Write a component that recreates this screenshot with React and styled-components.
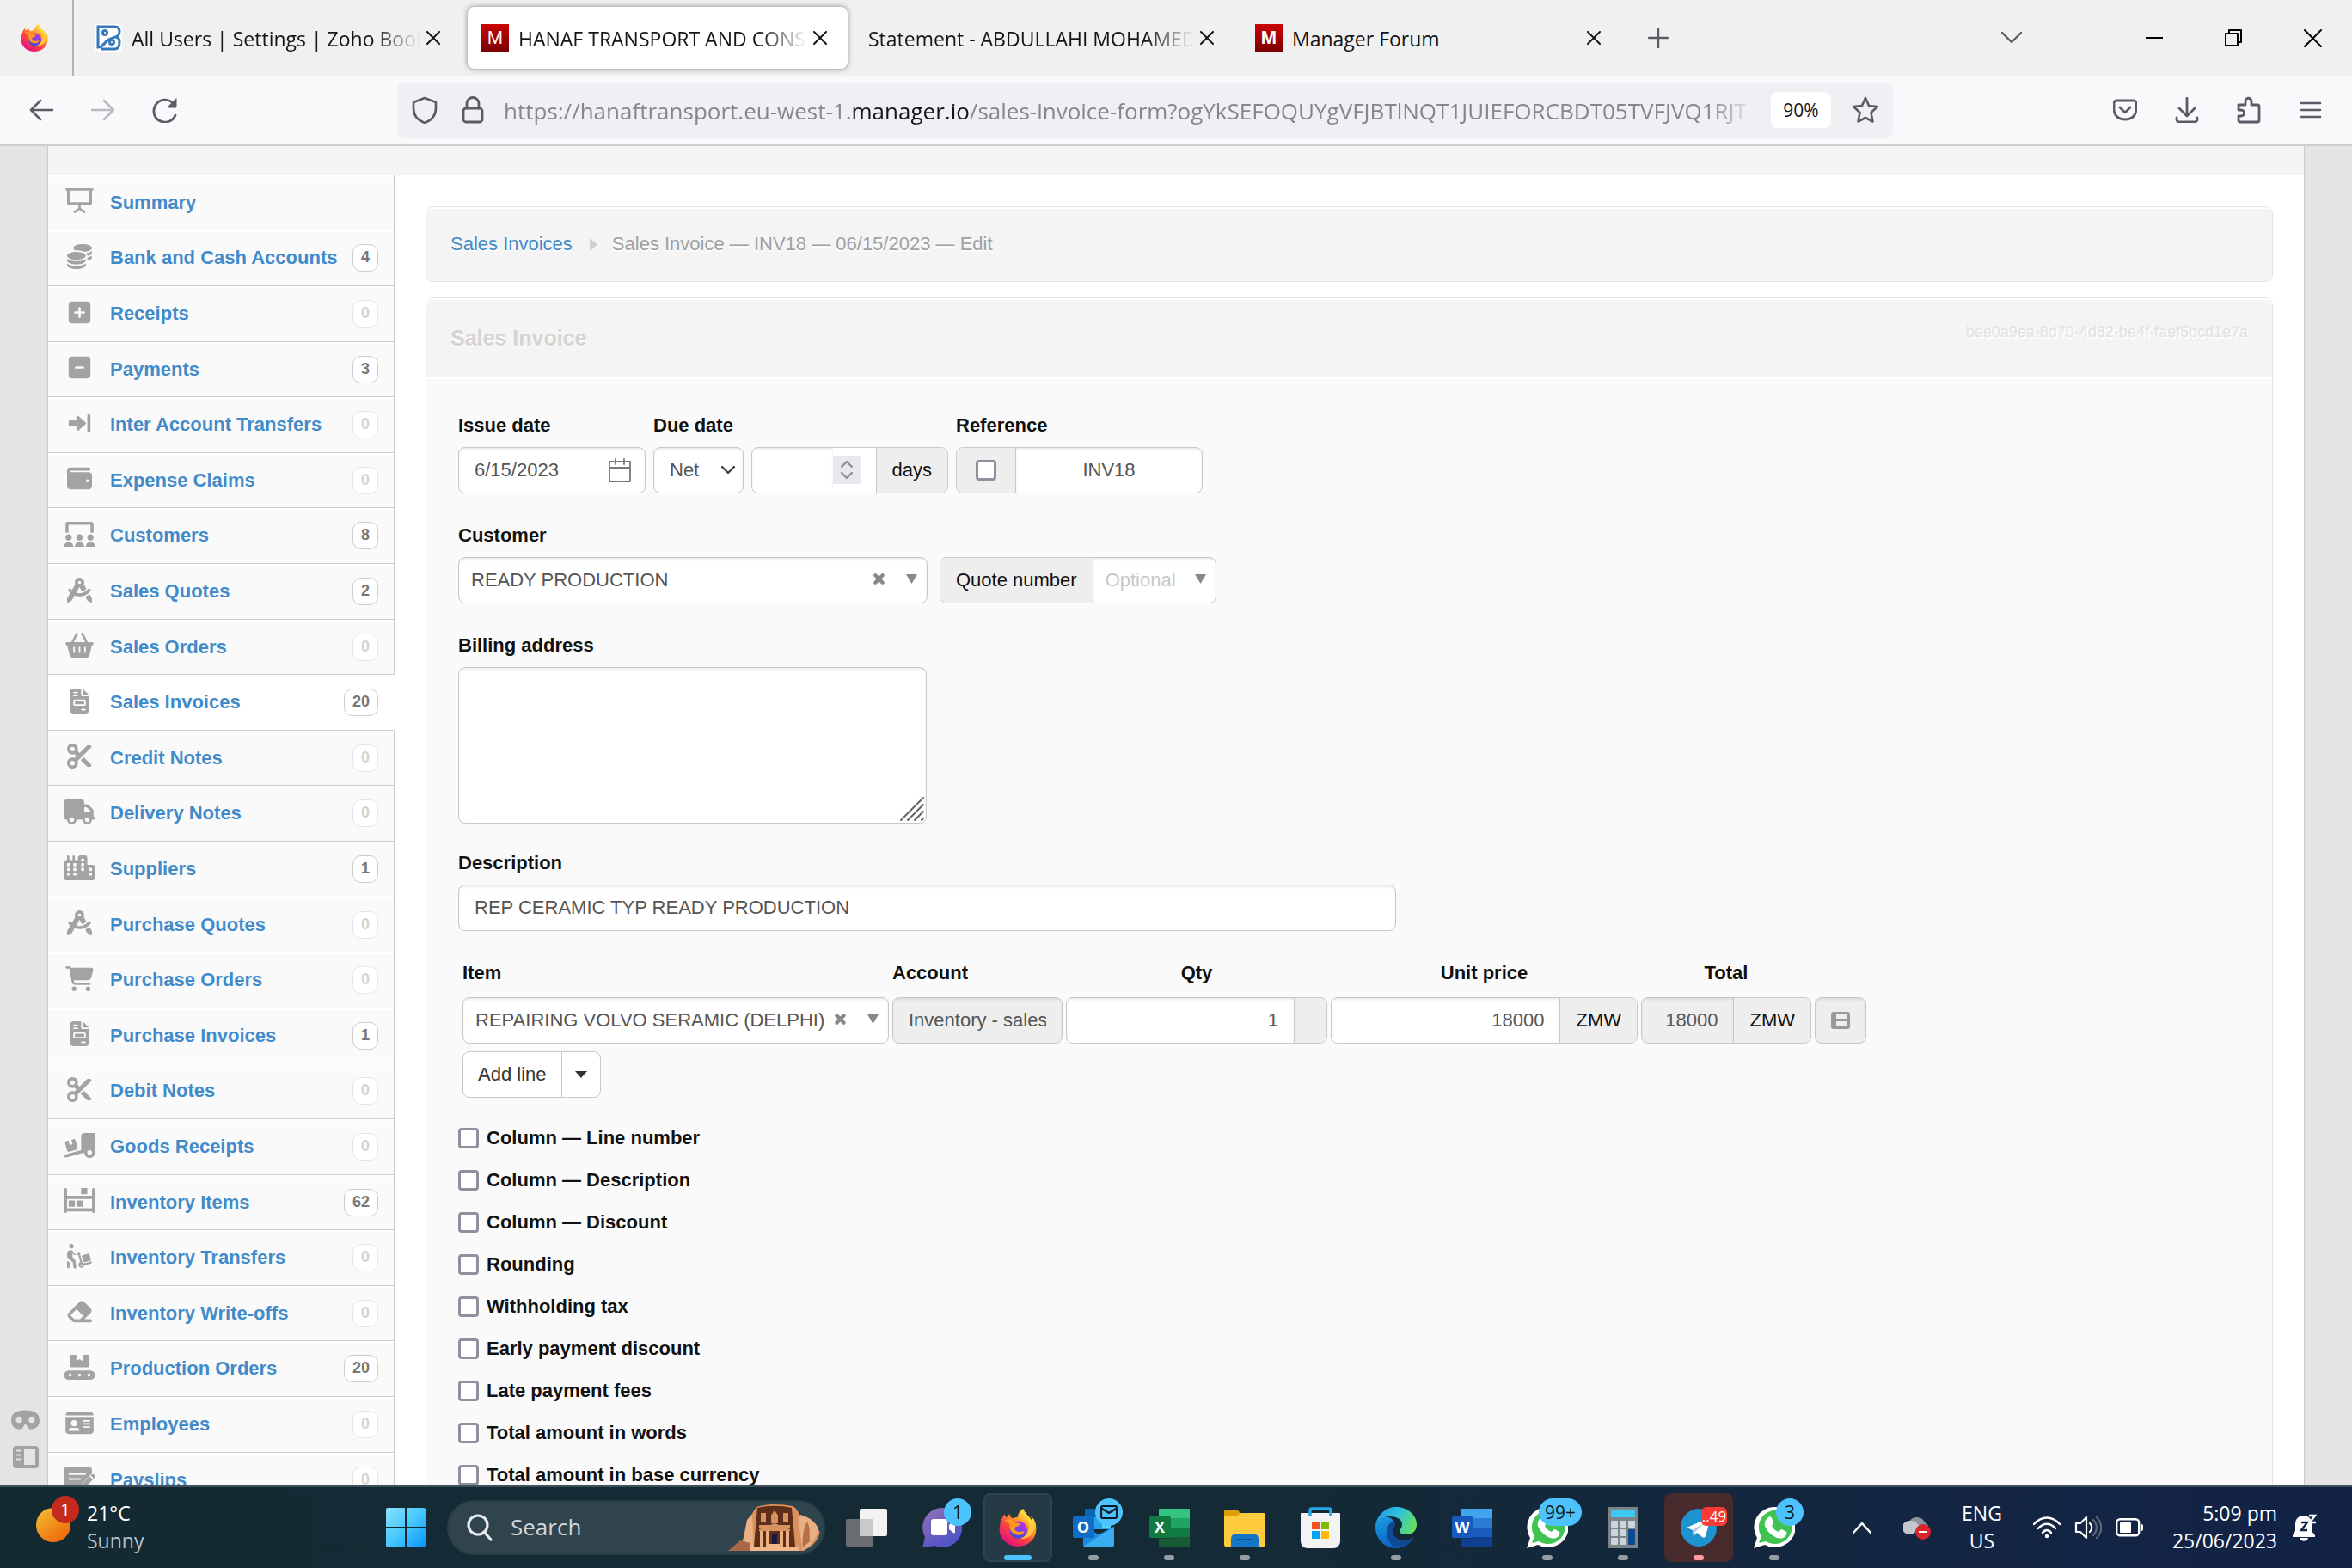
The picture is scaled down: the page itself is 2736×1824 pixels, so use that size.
import React from 'react';
import styled, { createGlobalStyle, css } from 'styled-components';
import {
  FaCoins, FaSquarePlus, FaSquareMinus, FaWallet, FaCompassDrafting, FaBasketShopping,
  FaFileInvoice, FaScissors, FaTruck, FaCity, FaCartShopping, FaTruckRampBox, FaEraser,
  FaIdCard, FaMask,
} from 'react-icons/fa6';

const UI = '"Open Sans", "Noto Sans", sans-serif';
const PAGE = '"Liberation Sans", Arial, sans-serif';

const GlobalStyle = createGlobalStyle`
  *, *::before, *::after { box-sizing: border-box; }
  body { margin: 0; overflow: hidden; background: #e4e4e4; font-family: ${PAGE}; }
  button, input, select, textarea { font: inherit; color: inherit; margin: 0; }
  button { border: 0; background: none; padding: 0; cursor: pointer; }
  a { text-decoration: none; }
  svg { display: block; flex: none; }
`;

/* ---------- shell ---------- */

const Screen = styled.div`
  height: 100vh;
  display: flex;
  flex-direction: column;
`;

const TabStrip = styled.header`
  flex: none;
  display: flex;
  align-items: center;
  height: 88px;
  background: #f0f0f0;
  font: 23px/32px ${UI};
  color: #15141a;
`;

const ViewButton = styled.button`
  display: grid;
  place-items: center;
  width: 86px;
  height: 88px;
  padding-right: 4px;
  border-right: 2px solid #b1b1b3;
`;

const TabList = styled.div`
  flex: 0 1 auto;
  display: flex;
  gap: 8px;
  padding: 0 11px 0 8px;
  min-width: 0;
`;

const Tab = styled.div`
  flex: 0 1 442px;
  width: 442px;
  min-width: 0;
  height: 72px;
  display: flex;
  align-items: center;
  gap: 11px;
  padding: 0 20px 0 16px;
  border-radius: 8px;
  ${p => p.$active && css`
    background: #fff;
    box-shadow: 0 0 6px rgba(0, 0, 0, 0.45);
  `}
`;

const TabTitle = styled.span`
  flex: 1;
  min-width: 0;
  margin-right: -8px;
  padding-top: 2px;
  overflow: hidden;
  white-space: nowrap;
  ${p => p.$fade && css`mask-image: linear-gradient(to left, transparent, #000 56px);`}
`;

const TabClose = styled.button`
  flex: none;
  display: grid;
  place-items: center;
  width: 24px;
  height: 32px;
`;

const RedMark = styled.span`
  flex: none;
  width: 32px;
  height: 32px;
  background: linear-gradient(#cc0404, #7a0000);
  color: #fff;
  font: ${p => (p.$bold ? 'bold' : 'normal')} 22px/32px ${PAGE};
  text-align: center;
`;

const StripButton = styled.button`
  flex: none;
  display: grid;
  place-items: center;
  width: ${p => p.$w || 64}px;
  height: 88px;
`;

const Push = styled.div`
  flex: 1;
`;

const TabsMenu = styled(StripButton)`
  margin-right: 88px;
`;

const NavBar = styled.nav`
  flex: none;
  display: flex;
  align-items: center;
  height: 82px;
  padding: 0 12px;
  background: #f9f9fb;
  border-bottom: 2px solid #ccc;
`;

const NavButton = styled.button`
  flex: none;
  display: grid;
  place-items: center;
  width: 72px;
  height: 64px;
  opacity: ${p => (p.disabled ? 0.4 : 1)};
`;

const AddressBar = styled.div`
  flex: 1;
  min-width: 0;
  display: flex;
  align-items: center;
  height: 64px;
  margin: 0 234px;
  padding: 0 4px;
  border-radius: 8px;
  background: #f0f0f4;
`;

const BarIcon = styled.button`
  flex: none;
  display: grid;
  place-items: center;
  width: 56px;
  height: 56px;
`;

const Address = styled.div`
  flex: 1;
  min-width: 0;
  padding: 2px 8px 0;
  overflow: hidden;
  white-space: nowrap;
  font: 26px/40px ${UI};
  color: #87868d;
  mask-image: linear-gradient(to left, transparent 10px, #000 60px);
  b { font-weight: 400; color: #15141a; }
`;

const ZoomLevel = styled.button`
  flex: none;
  width: 70px;
  height: 42px;
  margin: 0 12px 0 10px;
  border-radius: 8px;
  background: #fff;
  font: 21px/42px ${UI};
  color: #15141a;
`;

const Viewport = styled.div`
  flex: 1;
  min-height: 0;
  display: flex;
  overflow: hidden;
`;

const Gutter = styled.aside`
  flex: none;
  width: 55px;
  display: flex;
  flex-direction: column;
  justify-content: flex-end;
  align-items: center;
  gap: 14px;
  padding: 0 0 20px 4px;
  color: #a3a3a3;
`;

const MaskButton = styled.button`
  color: #a3a3a3;
  svg { width: 33px; height: auto; }
`;

const Page = styled.div`
  flex: 1;
  min-width: 0;
  background: #fff;
  border: solid #ccc;
  border-width: 0 1px;
`;

const PageBand = styled.div`
  height: 34px;
  background: #f4f4f4;
  border-bottom: 1px solid #d0d0d0;
`;

const Columns = styled.div`
  display: flex;
  align-items: flex-start;
`;

/* ---------- side menu ---------- */

const Menu = styled.nav`
  flex: none;
  width: 403px;
  display: grid;
  grid-auto-rows: 64px 65px 65px 64px 65px;
`;

const MenuRow = styled.a`
  display: flex;
  align-items: center;
  padding: 0 18px 0 16px;
  border: solid #ccc;
  border-width: 0 1px 1px 0;
  background: #fafafa;
  box-shadow: inset 0 2px 0 #fff;
  color: #428bca;
  font: bold 22px/26px ${PAGE};
  white-space: nowrap;
  ${p => p.$current && css`
    background: #fff;
    border-right-color: #fff;
  `}
`;

const MenuIcon = styled.span`
  display: grid;
  place-items: center;
  width: 40px;
  margin-right: 16px;
  padding-bottom: 4px;
  color: #a3a3a3;
  svg { width: 37px; height: 29px; }
`;

const MenuCount = styled.span`
  margin-left: auto;
  height: 32px;
  padding: 0 9px;
  border: 1px solid ${p => (p.$empty ? '#e6e6e6' : '#ccc')};
  border-radius: 10px;
  background: #fff;
  color: ${p => (p.$empty ? '#d4d4d4' : '#777')};
  font: bold 18px/29px ${PAGE};
`;

/* ---------- main column ---------- */

const Main = styled.main`
  flex: 1;
  min-width: 0;
  padding: 36px 36px 0;
  color: #111;
  font: 22px/26px ${PAGE};
`;

const Crumbs = styled.nav`
  display: flex;
  align-items: center;
  height: 88px;
  padding: 0 28px;
  border: 1px solid #e4e4e4;
  border-radius: 9px;
  background: #f4f4f4;
  box-shadow: inset 0 2px 0 #fff;
  text-shadow: 0 2px 0 #fff;
  color: #a0a0a0;
  a { color: #428bca; }
  svg { margin: 0 17px 0 20px; }
`;

const Panel = styled.section`
  margin-top: 18px;
  border: 1px solid #e4e4e4;
  border-radius: 9px;
  background: #fafafa;
`;

const PanelHead = styled.header`
  display: flex;
  justify-content: space-between;
  align-items: center;
  height: 92px;
  padding: 0 28px;
  border-bottom: 1px solid #e0e0e0;
  border-radius: 8px 8px 0 0;
  background: #f4f4f4;
  box-shadow: inset 0 2px 0 #fff;
`;

const PanelTitle = styled.h1`
  margin: 0;
  font: bold 25px/30px ${PAGE};
  color: #d4d4d4;
  text-shadow: 0 2px 0 #fff;
`;

const PanelKey = styled.span`
  padding-bottom: 14px;
  font-size: 18px;
  color: #e2e2e2;
  text-shadow: 2px 2px 0 #fff;
`;

const Form = styled.form`
  padding: 43px 37px;
  box-shadow: inset 0 2px 0 #fff;
`;

const FormRow = styled.div`
  display: flex;
  align-items: flex-end;
  gap: ${p => p.$gap || 9}px;
  margin-bottom: ${p => p.$after || 36}px;
`;

const Field = styled.div`
  display: flex;
  flex-direction: column;
  gap: 12px;
  ${p => p.$width && css`width: ${p.$width}px;`}
`;

const Label = styled.label`
  font: bold 22px/26px ${PAGE};
`;

const Inline = styled.div`
  display: flex;
  gap: 9px;
`;

const Box = styled.div`
  position: relative;
  display: flex;
  width: ${p => (p.$width ? `${p.$width}px` : 'auto')};
  height: ${p => p.$height || 54}px;
  border: 1px solid #c8c8c8;
  border-radius: 8px;
  overflow: hidden;
  background: ${p => (p.$muted ? '#eee' : '#fff')};
  color: #555;
`;

const controlText = css`
  flex: 1;
  min-width: 0;
  border: 0;
  outline: 0;
  background: transparent;
  box-shadow: inset 0 2px 3px rgba(0, 0, 0, 0.08);
  text-align: ${p => p.$align || 'left'};
`;

const Input = styled.input`
  ${controlText}
  padding: 0 18px;
  appearance: textfield;
  &::-webkit-inner-spin-button { appearance: none; }
`;

const Area = styled.textarea`
  ${controlText}
  padding: 12px 18px;
  resize: none;
`;

const Select = styled.select`
  ${controlText}
  appearance: none;
  padding: 0 ${p => p.$right || 18}px 0 ${p => p.$left || 14}px;
  ${p => p.$hint && css`color: #c8c8c8;`}
`;

const Addon = styled.span`
  flex: none;
  display: grid;
  place-items: center;
  min-width: ${p => p.$min || 0}px;
  padding: 0 18px;
  border: solid #c8c8c8;
  border-width: ${p => (p.$lead ? '0 1px 0 0' : '0 0 0 1px')};
  background: #eee;
  color: #111;
  white-space: nowrap;
`;

const Overlay = styled.span`
  position: absolute;
  right: ${p => p.$right}px;
  top: 0;
  bottom: 0;
  display: flex;
  align-items: center;
  gap: ${p => p.$gap || 0}px;
  pointer-events: none;
`;

const ComboMarks = styled(Overlay)`
  padding-bottom: 4px;
`;

const Grip = styled.span`
  position: absolute;
  right: 2px;
  bottom: 2px;
  pointer-events: none;
`;

const Stepper = styled.span`
  display: flex;
  flex-direction: column;
  align-self: center;
  justify-content: space-evenly;
  align-items: center;
  width: 33px;
  height: 32px;
  margin-right: 17px;
  background: #e8e8ee;
`;

const Tick = styled.input`
  flex: none;
  appearance: none;
  width: 24px;
  height: 24px;
  margin: 0;
  border: 3px solid #8f8f9d;
  border-radius: 4px;
  background: #fff;
`;

const Lines = styled.div`
  padding: 0 0 22px 5px;
`;

const LineTable = styled.table`
  border-collapse: collapse;
  th { padding: 0 4px 15px 0; font: bold 22px/26px ${PAGE}; text-align: center; }
  th:nth-child(-n + 2) { text-align: left; }
  td { padding: 0 4px 0 0; }
`;

const RowMenu = styled.button`
  display: grid;
  place-items: center;
  width: 60px;
  height: 54px;
  border: 1px solid #c8c8c8;
  border-radius: 8px;
  background: #eee;
  box-shadow: inset 0 2px 3px rgba(0, 0, 0, 0.08);
`;

const AddLine = styled.div`
  display: inline-flex;
  height: 54px;
  margin-top: 9px;
  border: 1px solid #c8c8c8;
  border-radius: 8px;
  background: #fff;
  color: #333;
  button { padding: 0 17px; }
  button + button { border-left: 1px solid #c8c8c8; padding: 0 15px; }
`;

const Option = styled.label`
  display: flex;
  align-items: center;
  gap: 9px;
  height: 49px;
  font: bold 22px/26px ${PAGE};
`;

/* ---------- taskbar ---------- */

const Taskbar = styled.footer`
  flex: none;
  display: flex;
  align-items: center;
  height: 96px;
  border-top: 2px solid #40505a;
  background: linear-gradient(90deg, #142a33 0%, #142a36 55%, #132543 85%, #122246 100%);
  color: #fff;
  font: 23px/32px ${UI};
`;

const Weather = styled.button`
  flex: none;
  display: flex;
  align-items: center;
  gap: 8px;
  width: 432px;
  padding-left: 40px;
  text-align: left;
  > span { padding-bottom: 3px; }
  span { display: block; }
  small { display: block; font-size: 23px; color: #b9c1c5; }
`;

const Apps = styled.div`
  display: flex;
  align-items: center;
  gap: 8px;
`;

const AppButton = styled.button`
  position: relative;
  display: grid;
  place-items: center;
  width: 80px;
  height: 80px;
  border-radius: 8px;
  ${p => p.$tone === 'active' && css`background: #253a45; box-shadow: inset 0 0 0 2px #2f434d;`}
  ${p => p.$tone === 'alert' && css`background: #472a2c;`}
`;

const Running = styled.i`
  position: absolute;
  bottom: 2px;
  left: 50%;
  width: ${p => (p.$wide ? 32 : 12)}px;
  height: 6px;
  margin-left: ${p => (p.$wide ? -16 : -6)}px;
  border-radius: 3px;
  background: ${p => p.$color || '#949da3'};
`;

const Badge = styled.span`
  position: absolute;
  top: ${p => p.$top || 6}px;
  left: ${p => p.$left || 42}px;
  display: grid;
  place-items: center;
  min-width: ${p => (p.$red ? 30 : 32)}px;
  height: ${p => (p.$red ? 22 : 32)}px;
  padding: 0 ${p => (p.$wide ? 7 : 0)}px;
  border-radius: ${p => (p.$red ? 6 : 16)}px;
  background: ${p => (p.$red ? '#f73c35' : '#4cc2ff')};
  color: ${p => (p.$red ? '#fff' : '#0b1a22')};
  font: ${p => (p.$red ? 17 : 21)}px/22px ${UI};
`;

const SearchBox = styled.label`
  position: relative;
  display: flex;
  align-items: center;
  gap: 21px;
  width: 440px;
  height: 64px;
  padding: 0 3px 0 21px;
  border: 2px solid #2a3e47;
  border-radius: 32px;
  background: #30444d;
  input {
    flex: 1; min-width: 0; border: 0; outline: 0; background: transparent;
    font: 26px/36px ${UI}; padding: 0 0 2px;
  }
  input::placeholder { color: #d0d6d9; opacity: 1; }
`;

const Tray = styled.div`
  margin-left: auto;
  display: flex;
  align-items: center;
  padding-right: 25px;
  > svg { margin-right: 16px; }
`;

const TrayIcon = styled.button`
  display: grid;
  place-items: center;
  width: 64px;
  height: 64px;
`;

const TrayText = styled.button`
  text-align: ${p => p.$align || 'center'};
  margin: ${p => p.$margin};
  padding-bottom: 3px;
  span { display: block; }
`;

/* ---------- drawings ---------- */

const Ln = ({ w = 32, h = w, box = `0 0 ${w} ${h}`, color = '#5b5b66', sw = 2.4, d, children, fill = 'none' }) => (
  <svg width={w} height={h} viewBox={box} fill={fill} stroke={color} strokeWidth={sw} strokeLinecap="round" strokeLinejoin="round">
    {d && <path d={d} />}
    {children}
  </svg>
);

const Cross = ({ size = 16, color = '#15141a', sw = 2 }) => (
  <Ln w={size} color={color} sw={sw} d={`M1 1 ${size - 1} ${size - 1}M${size - 1} 1 1 ${size - 1}`} />
);

const Solid = ({ box = '0 0 640 512', children }) => (
  <svg viewBox={box} fill="currentColor">{children}</svg>
);

const Screenboard = () => (
  <Solid box="0 0 576 512">
    <path fillRule="evenodd" d="M24 0h528a24 24 0 0 1 0 48h-8v256a48 48 0 0 1-48 48H80a48 48 0 0 1-48-48V48h-8a24 24 0 0 1 0-48zM96 48v240h384V48z" />
    <path d="M264 340h48v64l88 62a24 24 0 0 1-28 40l-84-60-84 60a24 24 0 0 1-28-40l88-62z" />
  </Solid>
);

const ArrowToLine = () => (
  <Solid box="0 0 448 512">
    <path d="M0 224v56a36 36 0 0 0 36 36h124v60a28 28 0 0 0 48 20l138-124a26 26 0 0 0 0-38L208 110a28 28 0 0 0-48 20v58H36a36 36 0 0 0-36 36z" />
    <rect x="384" y="64" width="64" height="384" rx="32" />
  </Solid>
);

const Audience = () => (
  <Solid>
    <path d="M32 48A48 48 0 0 1 80 0h480a48 48 0 0 1 48 48v176h-62V62H94v162H32z" />
    <circle cx="96" cy="320" r="64" /><circle cx="320" cy="320" r="64" /><circle cx="544" cy="320" r="64" />
    <path d="M0 512a90 90 0 0 1 90-96h14a90 90 0 0 1 88 96zM224 512a90 90 0 0 1 90-96h14a90 90 0 0 1 88 96zM448 512a90 90 0 0 1 90-96h14a90 90 0 0 1 88 96z" />
  </Solid>
);

const Shelves = () => (
  <Solid>
    <path d="M0 32a32 32 0 0 1 64 0v128h512V32a32 32 0 0 1 64 0v448a32 32 0 0 1-64 0H64a32 32 0 0 1-64 0zM64 224v192h512V224z" fillRule="evenodd" />
    <rect x="352" y="0" width="128" height="128" rx="12" />
    <rect x="96" y="256" width="128" height="128" rx="12" /><rect x="256" y="256" width="128" height="128" rx="12" />
  </Solid>
);

const PersonDolly = () => (
  <Solid box="0 0 512 512">
    <circle cx="88" cy="48" r="46" />
    <path d="M0 250v-50c0-40 28-72 66-72 30 0 50 16 66 40l34 50h58l-8-40a22 22 0 0 1 42-8l54 210a62 62 0 0 1 40 16l130-36a22 22 0 0 1 12 42l-138 38a62 62 0 1 1-86-70l-38-140h-88l-34-38v74l50 62c8 10 12 20 14 30l16 110a30 30 0 0 1-60 10l-14-100-74-70c-26-22-42-32-42-58z" />
    <path d="M0 340c16 18 34 32 58 48l-4 28v66a30 30 0 0 1-54 0z" />
    <path d="m316 232 120-34a18 18 0 0 1 22 12l30 112a18 18 0 0 1-12 22l-116 32a18 18 0 0 1-22-12l-34-110a18 18 0 0 1 12-22z" />
    <circle cx="296" cy="440" r="20" fill="#fafafa" />
  </Solid>
);

const Conveyor = () => (
  <Solid>
    <path d="M128 24a24 24 0 0 1 24-24h104v130l64-40 64 40V0h104a24 24 0 0 1 24 24v208a24 24 0 0 1-24 24H152a24 24 0 0 1-24-24z" />
    <path fillRule="evenodd" d="M96 320h448a96 96 0 0 1 0 192H96a96 96 0 0 1 0-192zm32 64a32 32 0 1 0 0 64 32 32 0 0 0 0-64zm192 0a32 32 0 1 0 0 64 32 32 0 0 0 0-64zm192 0a32 32 0 1 0 0 64 32 32 0 0 0 0-64z" />
  </Solid>
);

const CheckPen = () => (
  <Solid>
    <path fillRule="evenodd" d="M60 32h456a60 60 0 0 1 60 60v68L380 356l-24 92H60a60 60 0 0 1-60-60V92a60 60 0 0 1 60-60zm52 120a16 16 0 0 0 0 36h320a16 16 0 0 0 0-36zm0 104a16 16 0 0 0 0 36h224a16 16 0 0 0 0-36z" />
    <path d="m548 200 20-18a36 36 0 0 1 50 0l14 14a36 36 0 0 1 0 50l-20 20zM526 222l66 66-124 124-88 24 22-90z" />
  </Solid>
);

const SidePanelIcon = () => (
  <svg width="30" height="26" viewBox="0 0 30 26" fill="#a3a3a3">
    <path fillRule="evenodd" d="M4 0h22a4 4 0 0 1 4 4v18a4 4 0 0 1-4 4H4a4 4 0 0 1-4-4V4a4 4 0 0 1 4-4zm9 4v18h13V4zM4 4.500h5v2H4zM4 9.500h5v2H4zM4 14.500h5v2H4z" />
  </svg>
);

const FirefoxLogo = ({ size, id }) => (
  <svg width={size} height={size} viewBox="0 0 64 64">
    <defs>
      <linearGradient id={`${id}a`} x1="0.85" y1="0.1" x2="0.25" y2="0.95">
        <stop offset="0" stopColor="#fff44f" /><stop offset="0.3" stopColor="#ffa52c" />
        <stop offset="0.6" stopColor="#ff4a3d" /><stop offset="1" stopColor="#e3107c" />
      </linearGradient>
      <linearGradient id={`${id}b`} x1="0.7" y1="0" x2="0.3" y2="1">
        <stop offset="0" stopColor="#b833e1" /><stop offset="0.6" stopColor="#7542e5" /><stop offset="1" stopColor="#3a4ed0" />
      </linearGradient>
    </defs>
    <path fill={`url(#${id}a)`} d="M61 22c-1-4-4-7-7-9 2 4 3 7 3 10C54 15 47 11 43 4l-2-4c-6 4-9 9-9 14-3 0-5 1-7 2-2 0-6-1-7-7-2 1-4 4-5 6-2-1-3-4-3-6C6 13 3 20 2 27c-1 3-1 6-1 9a31 28 0 0 0 62 0c0-5 0-10-2-14z" />
    <circle cx="33" cy="36" r="15" fill={`url(#${id}b)`} />
    <path fill="#ff9a1f" d="M10 20c7-4 13-2 17 4 4 0 8 0 8 3-1 3-6 3-8 5-1 4 1 6 5 7 4 1 8-1 11 0-3 6-11 7-17 4-7-4-9-12-7-17-3-2-7-3-9-6z" />
    <path fill="#ffd43a" opacity="0.85" d="M41 0c-3 6-1 11 4 16s7 10 6 17c-1 9-8 16-16 18 14 1 24-7 25-19C61 19 46 14 41 0z" />
  </svg>
);

const BooksLogo = () => (
  <svg width="32" height="32" viewBox="0 0 32 32">
    <rect width="32" height="32" rx="5" fill="#fff" />
    <g fill="none" stroke="#3579bd" strokeWidth="3">
      <path d="M4 3h20c4 0 5 3 5 6 0 8-8 5-14 10-5 4-5 8-11 8V3z" />
      <path d="M24 15c4 0 5 3 5 6s-1 8-5 8H7" />
      <circle cx="12" cy="10" r="2.500" /><circle cx="20" cy="21" r="2.500" />
    </g>
  </svg>
);

const StartLogo = () => (
  <svg width="46" height="46" viewBox="0 0 46 46">
    <defs><linearGradient id="win" x1="0" y1="0" x2="1" y2="1"><stop offset="0" stopColor="#8be0ff" /><stop offset="0.5" stopColor="#45c8ff" /><stop offset="1" stopColor="#0a93ff" /></linearGradient></defs>
    <path fill="url(#win)" d="M2 0h20v22H0V2a2 2 0 0 1 2-2zM24 0h20a2 2 0 0 1 2 2v20H24zM0 24h22v22H2a2 2 0 0 1-2-2zM24 24h22v20a2 2 0 0 1-2 2H24z" />
  </svg>
);

const Petra = () => (
  <svg width="108" height="54" viewBox="0 0 108 54">
    <path fill="#d9925f" d="M14 54 18 38l5-18c2-2 4-4 5-9 2-5 5-9 9-9 12-3 26-2 38 0 5 2 6 7 9 11 5 2 10 2 16 12 4 6 8 4 6 10-2 8-9 14-18 19z" />
    <path fill="#eab083" d="M84 12c6 2 14 4 20 14 2 10-8 24-18 27 0-12-6-30-2-41zM15 54l7-36 6-7 2 43z" />
    <path fill="#b66f48" d="M92 20c-5 8-6 22-5 30l8-7c-1-8 1-16-3-23z" />
    <path fill="#5d2f1a" d="M34 4c12-3 28-3 40 0l4 45H30z" />
    <path fill="#d89262" d="M38 10h6v10h-6zM64 10h6v10h-6zM49 14l5-7 5 7zM50 14h8v8h-8zM36 24h36v3H36zM36 29l18-7 18 7v2H36z" />
    <path fill="#eab083" d="M37 31h4v18h-4zM44 31h4v18h-4zM60 31h4v18h-4zM67 31h4v18h-4z" />
    <path fill="#1b1740" d="M51 35h6v12h-6z" />
    <path fill="#f0b88a" d="M26 49h56v5H26zM48 46h12v4H48z" />
    <path fill="#a8674b" d="m0 54 14-12 12 3v9z" />
  </svg>
);

const TaskViewIcon = () => (
  <svg width="48" height="44" viewBox="0 0 48 44">
    <rect x="16" width="32" height="32" rx="2" fill="#f3f3f3" />
    <rect y="12" width="32" height="32" rx="2" fill="#6a6e70" />
    <path fill="#c9c9c9" d="M16 12h16v20H16z" />
  </svg>
);

const ChatIcon = () => (
  <svg width="46" height="46" viewBox="0 0 46 46">
    <defs><linearGradient id="chat" x1="0" y1="0" x2="0.6" y2="1"><stop offset="0" stopColor="#9471b5" /><stop offset="1" stopColor="#4f52c8" /></linearGradient></defs>
    <path fill="url(#chat)" d="M23 0a23 23 0 1 1-9 44L2 46c-2 0-2-1-1-3l2-9A23 23 0 0 1 23 0z" />
    <rect x="10" y="13" width="19" height="19" rx="3" fill="#fff" />
    <path fill="#fff" d="m31 20 5-4c1-1 2 0 2 1v11c0 1-1 2-2 1l-5-4z" />
  </svg>
);

const Office = ({ letter, dark, tones }) => (
  <svg width="47" height="44" viewBox="0 0 47 44">
    {tones.map((t, i) => <rect key={t} x="11" y={i * 11} width="36" height="11" fill={t} />)}
    <path d="M11 10h14v25H11z" opacity="0.25" />
    <rect y="9" width="25" height="25" rx="2" fill={dark} />
    <text x="12" y="28" textAnchor="middle" fontFamily="Open Sans, sans-serif" fontWeight="700" fontSize="18" fill="#fff">{letter}</text>
  </svg>
);

const OutlookIcon = () => (
  <svg width="48" height="44" viewBox="0 0 48 44">
    <path fill="#0a64b4" d="M14 0h30v24H14z" /><path fill="#28a0ea" d="M24 10h20v14H24z" /><path fill="#50d0f5" d="M34 10h10v12H34z" />
    <path fill="#1b8be0" d="M12 20l18 10 18-9v21a2 2 0 0 1-2 2H14a2 2 0 0 1-2-2z" />
    <path fill="#38aef0" d="M12 44 46 22l2-1v21a2 2 0 0 1-2 2z" />
    <rect y="9" width="25" height="25" rx="2" fill="#0f6cc7" />
    <text x="12" y="28" textAnchor="middle" fontFamily="Open Sans, sans-serif" fontWeight="700" fontSize="18" fill="#fff">O</text>
  </svg>
);

const FolderIcon = () => (
  <svg width="48" height="43" viewBox="0 0 48 43">
    <path fill="#dd9e05" d="M2 0h13l5 5v10H0V2a2 2 0 0 1 2-2z" />
    <path fill="#fecb3e" d="M0 7h15l5-3h26a2 2 0 0 1 2 2v35a2 2 0 0 1-2 2H2a2 2 0 0 1-2-2z" />
    <path fill="#1576c8" d="M8 43V34a6 6 0 0 1 6-6h20a6 6 0 0 1 6 6v9z" />
    <path fill="#0d4f93" d="M15 34h18v2H15z" />
  </svg>
);

const StoreIcon = () => (
  <svg width="46" height="48" viewBox="0 0 46 48">
    <path fill="#f3f3f3" d="M0 8a1 1 0 0 1 1-1h44a1 1 0 0 1 1 1v32a8 8 0 0 1-8 8H8a8 8 0 0 1-8-8z" />
    <path fill="none" stroke="#20a9ec" strokeWidth="3.500" d="M11 11V4a2 2 0 0 1 2-2h20a2 2 0 0 1 2 2v7" />
    <path fill="#f25022" d="M13 17h9v9h-9z" /><path fill="#7fba00" d="M24 17h9v9h-9z" />
    <path fill="#00a4ef" d="M13 28h9v9h-9z" /><path fill="#ffb900" d="M24 28h9v9h-9z" />
  </svg>
);

const EdgeIcon = () => (
  <svg width="48" height="48" viewBox="0 0 48 48">
    <defs>
      <linearGradient id="edgeA" x1="0" y1="0.3" x2="1" y2="0.6"><stop offset="0" stopColor="#1f9be0" /><stop offset="0.5" stopColor="#2fc2dc" /><stop offset="1" stopColor="#66e05a" /></linearGradient>
      <linearGradient id="edgeB" x1="0" y1="0" x2="0.4" y2="1"><stop offset="0" stopColor="#1b9de2" /><stop offset="1" stopColor="#0a62c4" /></linearGradient>
    </defs>
    <path fill="url(#edgeB)" d="M0 24C0 14 8 10 15 12c7 2 9 8 5 13-3 5 0 12 6 15 7 3 14 0 18-4-4 8-12 12-20 12A24 24 0 0 1 0 24z" />
    <path fill="#104a93" d="M13 29c0-6 3-11 8-12 3 1 2 5 0 8-2 5 1 11 7 13 6 3 12 1 15-3 1 0 1 1 0 3-4 6-10 9-17 9-8-1-13-9-13-18z" />
    <path fill="url(#edgeA)" d="M0 22C2 8 13 0 24 0c14 0 24 10 24 20 0 8-5 12-12 12-5 0-8-2-8-4s3-3 3-8c0-6-7-9-14-9C8 11 2 15 0 22z" />
  </svg>
);

const WhatsAppIcon = () => (
  <svg width="48" height="48" viewBox="0 0 48 48">
    <path fill="#fff" d="M24 0a24 23.500 0 1 1-11 44L0 48l4-12A23.500 23.500 0 0 1 24 0z" />
    <path fill="#3fc351" d="M24 4a20 19.500 0 1 1-10 36l-8 2 3-8A19.500 19.500 0 0 1 24 4z" />
    <path fill="#fff" d="M17 12c1-1 3-1 4 1l2 5c0 1-1 3-2 4 2 4 5 6 8 7 1-1 2-3 4-3l5 3c1 1 0 5-2 6-3 2-7 2-11 0-6-3-10-8-12-13-1-4 1-8 4-10z" />
  </svg>
);

const CalculatorIcon = () => (
  <svg width="36" height="48" viewBox="0 0 36 48">
    <rect width="36" height="48" rx="2" fill="#7d8489" />
    <rect x="4" y="4" width="28" height="8" rx="1" fill="#3fc8f2" />
    <g fill="#ccd6de">
      {[16, 26, 36].map(y => [4, 14, 24].map(x => (x === 24 && y > 16 ? null : <rect key={`${x}-${y}`} x={x} y={y} width="8" height="8" rx="1" />)))}
    </g>
    <rect x="24" y="26" width="8" height="18" rx="1" fill="#0d4a8f" />
  </svg>
);

const TelegramIcon = () => (
  <svg width="42" height="44" viewBox="0 0 42 44">
    <ellipse cx="21" cy="22" rx="21" ry="22" fill="#1d93d2" />
    <path fill="#fff" d="M7 22 32 11c2 0 2 1 2 3l-5 18c-1 2-2 2-4 1l-6-5-4 4-1-7z" />
    <path fill="#a9c9dd" d="m14 25 14-9-11 11-1 6z" />
  </svg>
);

const CloudIcon = () => (
  <svg width="32" height="28" viewBox="0 0 32 28">
    <path fill="#8d94a0" d="M6 10a10 10 0 0 1 19-2c4 1 5 6 3 10L14 20z" />
    <path fill="#c3c6cc" d="M8 6c5 0 7 2 10 5l-6 11H6A8 8 0 0 1 8 6z" />
    <circle cx="23" cy="19" r="9" fill="#d9252b" /><path fill="#fff" d="M18 18h10v2H18z" />
  </svg>
);

const WifiIcon = () => (
  <Ln w={32} h={26} color="#fff" sw={2.4}>
    <path d="M1 9C10-1 22-1 31 9M6 14c6-7 14-7 20 0M11 19c3-4 7-4 10 0" />
    <circle cx="16" cy="23" r="1" />
  </Ln>
);

const SpeakerIcon = () => (
  <Ln w={32} h={28} color="#fff" sw={2.2}>
    <path d="M2 9h5l7-7v24l-7-7H2zM18 9c3 3 3 7 0 10" /><path d="M22 5c5 5 5 13 0 18M26 2c7 7 7 17 0 24" opacity="0.3" />
  </Ln>
);

const BatteryIcon = () => (
  <svg width="32" height="22" viewBox="0 0 32 22"><rect x="1.200" y="1.200" width="26" height="19" rx="4" fill="none" stroke="#fff" strokeWidth="2.400" /><rect x="5" y="5" width="13" height="12" rx="1" fill="#fff" /><path fill="#fff" d="M29 7h1a2 2 0 0 1 2 2v4a2 2 0 0 1-2 2h-1z" /></svg>
);

const BellIcon = () => (
  <svg width="28" height="32" viewBox="0 0 28 32">
    <path fill="#fff" d="M3 20V12C3 5 8 2 13 2c4 0 7 2 9 6v12l4 5v2H0v-2zM8 28h10c-1 5-9 5-10 0z" />
    <path fill="none" stroke="#132343" strokeWidth="2.400" d="M10 10h7l-7 9h7" />
    <path fill="none" stroke="#fff" strokeWidth="2.400" d="M19 2h7l-6 8h7" />
  </svg>
);

const Triangle = ({ w = 13, h = 11, color = '#888' }) => (
  <svg width={w} height={h} viewBox={`0 0 ${w} ${h}`}><path fill={color} d={`M0 0h${w}L${w / 2} ${h}z`} /></svg>
);

const ClearIcon = () => (
  <Ln w={15} h={15} color="#888" sw={5} box="0 0 18 18" d="M4 4 14 14M14 4 4 14" />
);

/* ---------- data ---------- */

const menu = [
  ['Summary', Screenboard, null],
  ['Bank and Cash Accounts', FaCoins, 4],
  ['Receipts', FaSquarePlus, 0],
  ['Payments', FaSquareMinus, 3],
  ['Inter Account Transfers', ArrowToLine, 0],
  ['Expense Claims', FaWallet, 0],
  ['Customers', Audience, 8],
  ['Sales Quotes', FaCompassDrafting, 2],
  ['Sales Orders', FaBasketShopping, 0],
  ['Sales Invoices', FaFileInvoice, 20],
  ['Credit Notes', FaScissors, 0],
  ['Delivery Notes', FaTruck, 0],
  ['Suppliers', FaCity, 1],
  ['Purchase Quotes', FaCompassDrafting, 0],
  ['Purchase Orders', FaCartShopping, 0],
  ['Purchase Invoices', FaFileInvoice, 1],
  ['Debit Notes', FaScissors, 0],
  ['Goods Receipts', FaTruckRampBox, 0],
  ['Inventory Items', Shelves, 62],
  ['Inventory Transfers', PersonDolly, 0],
  ['Inventory Write-offs', FaEraser, 0],
  ['Production Orders', Conveyor, 20],
  ['Employees', FaIdCard, 0],
  ['Payslips', CheckPen, 0],
];

const options = [
  'Column — Line number', 'Column — Description', 'Column — Discount', 'Rounding',
  'Withholding tax', 'Early payment discount', 'Late payment fees',
  'Total amount in words', 'Total amount in base currency',
];

const tabs = [
  { title: 'All Users | Settings | Zoho Books', icon: <BooksLogo />, fade: true },
  { title: 'HANAF TRANSPORT AND CONS', icon: <RedMark>M</RedMark>, active: true, fade: true },
  { title: 'Statement - ABDULLAHI MOHAMED', fade: true },
  { title: 'Manager Forum', icon: <RedMark $bold>M</RedMark> },
];

/* ---------- sections ---------- */

function BrowserChrome() {
  return (
    <>
      <TabStrip>
        <ViewButton aria-label="Firefox View"><FirefoxLogo size={32} id="fxs" /></ViewButton>
        <TabList>
          {tabs.map(t => (
            <Tab key={t.title} $active={t.active}>
              {t.icon}
              <TabTitle $fade={t.fade}>{t.title}</TabTitle>
              <TabClose aria-label="Close tab"><Cross /></TabClose>
            </Tab>
          ))}
        </TabList>
        <StripButton aria-label="New tab"><Ln w={24} d="M12 1v22M1 12h22" /></StripButton>
        <Push />
        <TabsMenu aria-label="List all tabs"><Ln w={24} h={14} d="M1 1l11 11L23 1" /></TabsMenu>
        <StripButton $w={92} aria-label="Minimise"><Ln w={20} h={2} color="#000" d="M0 1h20" /></StripButton>
        <StripButton $w={92} aria-label="Restore">
          <Ln w={20} color="#000" sw={2} d="M1 5h14v14H1zM5 5V1h14v14h-4" />
        </StripButton>
        <StripButton $w={92} aria-label="Close"><Cross size={21} color="#000" /></StripButton>
      </TabStrip>
      <NavBar>
        <NavButton aria-label="Back"><Ln w={28} h={26} sw={2.600} d="M27 13H2M13 2 2 13l11 11" /></NavButton>
        <NavButton aria-label="Forward" disabled><Ln w={28} h={26} sw={2.600} d="M1 13h25M15 2l11 11-11 11" /></NavButton>
        <NavButton aria-label="Reload">
          <Ln w={30} sw={2.800}>
            <path d="M27 21A13 13 0 1 1 25 8" /><path d="M28 2v10H18z" fill="#5b5b66" strokeWidth="1" />
          </Ln>
        </NavButton>
        <AddressBar>
          <BarIcon aria-label="Tracking protection"><Ln w={30} h={32} sw={2.600} d="M15 2 28 7v7c0 8-5 14-13 17C7 28 2 22 2 14V7z" /></BarIcon>
          <BarIcon aria-label="Site information">
            <Ln w={26} h={32} sw={2.800}><rect x="2" y="14" width="22" height="16" rx="3" /><path d="M6 14V8a7 6.500 0 0 1 14 0v6" /></Ln>
          </BarIcon>
          <Address>https://hanaftransport.eu-west-1.<b>manager.io</b>/sales-invoice-form?ogYkSEFOQUYgVFJBTlNQT1JUIEFORCBDT05TVFJVQ1RJT</Address>
          <ZoomLevel>90%</ZoomLevel>
          <BarIcon aria-label="Bookmark"><Ln w={32} h={32} sw={2.600} d="m16 2 4 9 10 1-7.500 7 2 10.500L16 25l-8.500 4.500L9.500 19 2 12l10-1z" /></BarIcon>
        </AddressBar>
        <NavButton aria-label="Save to Pocket"><Ln w={28} h={26} sw={2.800} d="M4 2h20a3 3 0 0 1 3 3v7c0 7-5 12-13 12S1 19 1 12V5a3 3 0 0 1 3-3zM8 10l6 6 6-6" /></NavButton>
        <NavButton aria-label="Downloads"><Ln w={28} h={30} sw={2.800} d="M14 1v21M5 13l9 9 9-9M2 24v2a3 3 0 0 0 3 3h18a3 3 0 0 0 3-3v-2" /></NavButton>
        <NavButton aria-label="Extensions"><Ln w={28} h={32} sw={2.800} d="M2 10h8V6c0-5 7-5 7 0v4h7a2 2 0 0 1 2 2v16a2 2 0 0 1-2 2H4a2 2 0 0 1-2-2v-5h3c5 0 5-7 0-7H2z" /></NavButton>
        <NavButton aria-label="Menu"><Ln w={26} h={20} sw={2.600} d="M2 2h22M2 10h22M2 18h22" /></NavButton>
      </NavBar>
    </>
  );
}

function SideMenu() {
  return (
    <Menu>
      {menu.map(([name, Icon, count]) => (
        <MenuRow key={name} href="#" $current={name === 'Sales Invoices'}>
          <MenuIcon><Icon /></MenuIcon>
          {name}
          {count !== null && <MenuCount $empty={count === 0}>{count}</MenuCount>}
        </MenuRow>
      ))}
    </Menu>
  );
}

function InvoiceForm() {
  return (
    <Form onSubmit={e => e.preventDefault()}>
      <FormRow>
        <Field>
          <Label htmlFor="issue">Issue date</Label>
          <Box $width={218}>
            <Input id="issue" defaultValue="6/15/2023" />
            <Overlay $right={15}>
              <Ln w={28} h={28} color="#777" sw={1.800} d="M2 4h24v23H2zM2 11h24M9 1v6M19 1v6" />
            </Overlay>
          </Box>
        </Field>
        <Field>
          <Label htmlFor="terms">Due date</Label>
          <Inline>
            <Box $width={105}>
              <Select id="terms" $left={18}><option>Net</option></Select>
              <Overlay $right={9}><Ln w={16} h={10} color="#444" sw={2.400} d="M1 1l7 7 7-7" /></Overlay>
            </Box>
            <Box $width={229}>
              <Input type="number" aria-label="Days until due" />
              <Stepper>
                <Ln w={14} h={9} color="#8f8f9d" sw={2.400} d="M1 7l6-6 6 6" />
                <Ln w={14} h={9} color="#8f8f9d" sw={2.400} d="M1 1l6 6 6-6" />
              </Stepper>
              <Addon>days</Addon>
            </Box>
          </Inline>
        </Field>
        <Field>
          <Label htmlFor="reference">Reference</Label>
          <Box $width={287}>
            <Addon $lead $min={69}><Tick type="checkbox" aria-label="Automatic reference" /></Addon>
            <Input id="reference" defaultValue="INV18" $align="center" />
          </Box>
        </Field>
      </FormRow>

      <FormRow $gap={14}>
        <Field>
          <Label htmlFor="customer">Customer</Label>
          <Box $width={546}>
            <Select id="customer" $right={76}><option>READY PRODUCTION</option></Select>
            <ComboMarks $right={11} $gap={24}><ClearIcon /><Triangle /></ComboMarks>
          </Box>
        </Field>
        <Box $width={322}>
          <Addon as="label" htmlFor="quote" $lead>Quote number</Addon>
          <Select id="quote" $hint><option>Optional</option></Select>
          <ComboMarks $right={11}><Triangle /></ComboMarks>
        </Box>
      </FormRow>

      <FormRow $after={33}>
        <Field>
          <Label htmlFor="billing">Billing address</Label>
          <Box $width={545} $height={182}>
            <Area id="billing" />
            <Grip><Ln w={28} h={28} color="#666" sw={2} d="M1 27 27 1M9 27 27 9M17 27l10-10M25 27l2-2" /></Grip>
          </Box>
        </Field>
      </FormRow>

      <FormRow>
        <Field $width={1091}>
          <Label htmlFor="description">Description</Label>
          <Box><Input id="description" defaultValue="REP CERAMIC TYP READY PRODUCTION" /></Box>
        </Field>
      </FormRow>

      <Lines>
        <LineTable>
          <thead>
            <tr><th>Item</th><th>Account</th><th>Qty</th><th>Unit price</th><th>Total</th><th aria-label="Row menu" /></tr>
          </thead>
          <tbody>
            <tr>
              <td>
                <Box $width={496}>
                  <Select aria-label="Item" $right={60}><option>REPAIRING VOLVO SERAMIC (DELPHI)</option></Select>
                  <ComboMarks $right={11} $gap={24}><ClearIcon /><Triangle /></ComboMarks>
                </Box>
              </td>
              <td><Box $width={198} $muted><Input aria-label="Account" readOnly defaultValue="Inventory - sales" /></Box></td>
              <td><Box $width={304}><Input aria-label="Quantity" defaultValue="1" $align="right" /><Addon $min={38} /></Box></td>
              <td><Box $width={357}><Input aria-label="Unit price" defaultValue="18000" $align="right" /><Addon>ZMW</Addon></Box></td>
              <td><Box $width={198} $muted><Input aria-label="Total" readOnly defaultValue="18000" $align="right" /><Addon>ZMW</Addon></Box></td>
              <td>
                <RowMenu type="button" aria-label="Row options">
                  <svg width="22" height="20" viewBox="0 0 22 20"><path fill="#999" fillRule="evenodd" d="M3 0h16a3 3 0 0 1 3 3v14a3 3 0 0 1-3 3H3a3 3 0 0 1-3-3V3a3 3 0 0 1 3-3zm3 3v5h13V3zm0 8v6h13v-6z" /></svg>
                </RowMenu>
              </td>
            </tr>
          </tbody>
        </LineTable>
        <AddLine>
          <button type="button">Add line</button>
          <button type="button" aria-label="More ways to add"><Triangle w={14} h={8} color="#333" /></button>
        </AddLine>
      </Lines>

      {options.map(o => (
        <Option key={o}><Tick type="checkbox" />{o}</Option>
      ))}
    </Form>
  );
}

function DesktopBar() {
  return (
    <Taskbar>
      <Weather>
        <svg width="53" height="76" viewBox="0 0 53 76">
          <defs><linearGradient id="sun" x1="0" y1="0" x2="0.8" y2="1"><stop offset="0" stopColor="#f3c331" /><stop offset="1" stopColor="#f0640a" /></linearGradient></defs>
          <circle cx="22" cy="35" r="20" fill="url(#sun)" />
          <circle cx="36" cy="17" r="16" fill="#c42b1c" />
          <text x="36" y="24" textAnchor="middle" fontFamily="Open Sans, sans-serif" fontSize="20" fill="#fff">1</text>
        </svg>
        <span><span>21°C</span><small>Sunny</small></span>
      </Weather>
      <Apps>
        <AppButton aria-label="Start"><StartLogo /></AppButton>
        <SearchBox>
          <Ln w={30} h={32} color="#e8ecee" sw={3.200} d="M20 21l8 9"><circle cx="13" cy="13" r="11" /></Ln>
          <input placeholder="Search" aria-label="Search" />
          <Petra />
        </SearchBox>
        <AppButton aria-label="Task view"><TaskViewIcon /></AppButton>
        <AppButton aria-label="Chat"><ChatIcon /><Badge>1</Badge></AppButton>
        <AppButton aria-label="Firefox" $tone="active"><FirefoxLogo size={44} id="fxl" /><Running $wide $color="#4cc2ff" /></AppButton>
        <AppButton aria-label="Outlook"><OutlookIcon />
          <Badge><Ln w={20} h={16} color="#0b1a22" sw={2.200} d="M3 1h14a2 2 0 0 1 2 2v10a2 2 0 0 1-2 2H3a2 2 0 0 1-2-2V3a2 2 0 0 1 2-2zM2 4l8 5 8-5" /></Badge>
          <Running />
        </AppButton>
        <AppButton aria-label="Excel"><Office letter="X" dark="#107a41" tones={['#33c481', '#21a366', '#107c41', '#185c37']} /><Running /></AppButton>
        <AppButton aria-label="File Explorer"><FolderIcon /><Running /></AppButton>
        <AppButton aria-label="Microsoft Store"><StoreIcon /></AppButton>
        <AppButton aria-label="Edge"><EdgeIcon /><Running /></AppButton>
        <AppButton aria-label="Word"><Office letter="W" dark="#185abd" tones={['#41a5ee', '#2b7cd3', '#185abd', '#103f91']} /></AppButton>
        <AppButton aria-label="WhatsApp"><WhatsAppIcon /><Badge $left={30} $wide>99+</Badge><Running /></AppButton>
        <AppButton aria-label="Calculator"><CalculatorIcon /><Running /></AppButton>
        <AppButton aria-label="Telegram" $tone="alert"><TelegramIcon /><Badge $red $top={16} $left={43}>..49</Badge><Running $color="#ff99a4" /></AppButton>
        <AppButton aria-label="WhatsApp Business"><WhatsAppIcon /><Badge>3</Badge><Running /></AppButton>
      </Apps>
      <Tray>
        <TrayIcon aria-label="Show hidden icons"><Ln w={22} h={13} color="#fff" d="M1 12 11 1l10 11" /></TrayIcon>
        <TrayIcon aria-label="OneDrive"><CloudIcon /></TrayIcon>
        <TrayText $margin="0 36px 0 20px"><span>ENG</span><span>US</span></TrayText>
        <WifiIcon /><SpeakerIcon /><BatteryIcon />
        <TrayText $align="right" $margin="0 18px"><span>5:09 pm</span><span>25/06/2023</span></TrayText>
        <BellIcon />
      </Tray>
    </Taskbar>
  );
}

export default function App() {
  return (
    <Screen>
      <GlobalStyle />
      <BrowserChrome />
      <Viewport>
        <Gutter>
          <MaskButton aria-label="Incognito"><FaMask viewBox="0 64 576 384" /></MaskButton>
          <button aria-label="Toggle side panel"><SidePanelIcon /></button>
        </Gutter>
        <Page>
          <PageBand />
          <Columns>
            <SideMenu />
            <Main>
              <Crumbs>
                <a href="#">Sales Invoices</a>
                <svg width="9" height="15" viewBox="0 0 9 15"><path fill="#d0d0d0" d="M0 0l9 7.500L0 15z" /></svg>
                <span>Sales Invoice — INV18 — 06/15/2023 — Edit</span>
              </Crumbs>
              <Panel>
                <PanelHead>
                  <PanelTitle>Sales Invoice</PanelTitle>
                  <PanelKey>bee0a9ea-8d70-4d82-be4f-faef5bcd1e7a</PanelKey>
                </PanelHead>
                <InvoiceForm />
              </Panel>
            </Main>
          </Columns>
        </Page>
        <Gutter />
      </Viewport>
      <DesktopBar />
    </Screen>
  );
}
